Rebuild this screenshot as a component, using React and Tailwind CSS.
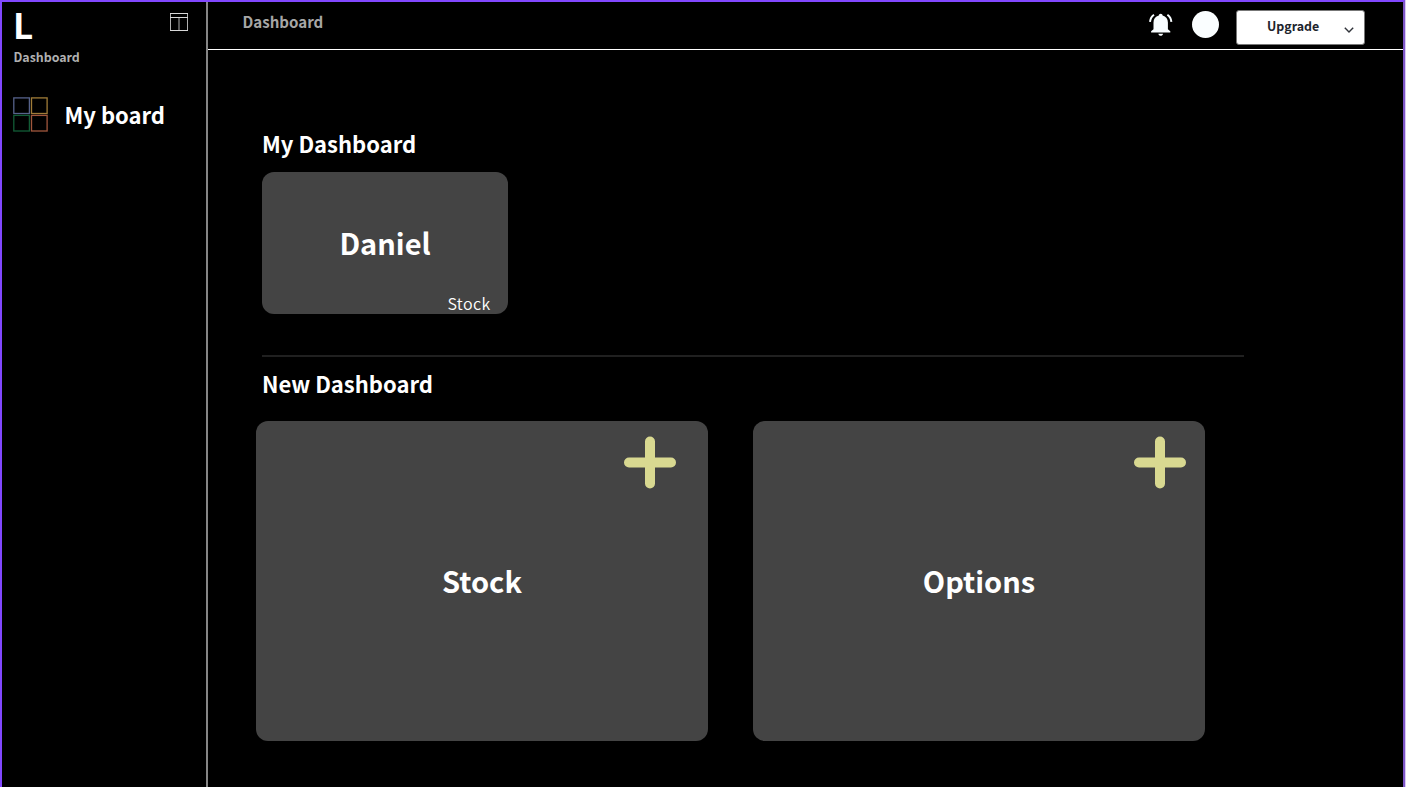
import React from "react";

function LayoutIcon() {
  return (
    <svg className="mt-[10px] h-5 w-5 shrink-0" viewBox="0 0 20 20" fill="none">
      <path d="M1.500 1v18M18.500 1v18M10 6v13" stroke="#b0b0b0" />
      <path d="M1 1.500h18M1 5.500h18M1 18.500h18" stroke="#d8d8d8" />
    </svg>
  );
}

function BoardIcon() {
  return (
    <svg className="h-[35px] w-[35px] shrink-0" viewBox="0 0 35 35" fill="none" strokeWidth="1.3">
      <rect x="0.800" y="0.900" width="15.600" height="15.600" stroke="#56628a" />
      <rect x="18.500" y="0.900" width="15.600" height="15.600" stroke="#a07c38" />
      <rect x="0.800" y="18.400" width="15.600" height="15.600" stroke="#125c36" />
      <rect x="18.500" y="18.400" width="15.600" height="15.600" stroke="#a0563c" />
    </svg>
  );
}

function BellIcon() {
  return (
    <svg className="h-6 w-6" viewBox="0 0 24 24" fill="#f8fdff">
      <path d="M11.700 .8c1.100 0 1.800.7 1.900 1.700 3.400.8 5.300 3.500 5.300 7v6.700l2.400 2.100v1.200H2.100v-1.200l2.400-2.100V9.500c0-3.500 1.900-6.200 5.300-7C9.900 1.500 10.600.8 11.700.8Z" />
      <path d="M9.400 20.700h4.600c-.2 1.300-1.100 2.100-2.300 2.100s-2.100-.8-2.300-2.100Z" />
      <path d="M5 1.700C2.700 3.300 1.300 5.600 1 8.900M18.400 1.700c2.300 1.600 3.700 3.900 4 7.200" fill="none" stroke="#f8fdff" strokeWidth="2" />
    </svg>
  );
}

function PlusIcon() {
  return (
    <svg className="h-[54px] w-[54px]" viewBox="0 0 54 54" stroke="#d9d991" strokeWidth="10" strokeLinecap="round">
      <path d="M27 5.500v42M6 26.500h42" />
    </svg>
  );
}

function Sidebar() {
  return (
    <aside className="flex w-[206px] shrink-0 flex-col border-r-2 border-[#858585] pl-[11px]">
      <div className="flex justify-between pr-[17px]">
        <div className="pt-[2px] text-[35px] leading-10 font-bold">L</div>
        <LayoutIcon />
      </div>
      <div className="mt-[4px] pl-[0.5px] text-[12.400px] leading-[18px] font-bold text-[#b0b0b0]">Dashboard</div>
      <div className="mt-[31px] flex items-center gap-[16.500px]">
        <BoardIcon />
        <span className="mb-px text-[22px] leading-[30px] font-bold">My board</span>
      </div>
    </aside>
  );
}

function Header() {
  return (
    <header className="flex h-12 shrink-0 items-start border-b border-white pr-[38px] pl-[34.500px]">
      <div className="mt-[7px] flex-1 text-[15.100px] leading-6 font-bold text-[#a6a6a6]">Dashboard</div>
      <div className="mt-[11px] mr-[19px]"><BellIcon /></div>
      <div className="mt-[9px] mr-[17px] h-[27px] w-[27px] rounded-full bg-[#fafeff]" />
      <button className="mt-[8px] flex h-[35px] w-[129px] items-center rounded-[3px] border border-[#777777] bg-white pl-[30px] text-[#20242c]">
        <span className="mb-[3px] w-[77px] text-left text-[12.400px] leading-5 font-bold">Upgrade</span>
        <svg className="mt-[4px] h-[10px] w-[10px] shrink-0" viewBox="0 0 10 10" fill="none" stroke="#30333a" strokeWidth="1.400">
          <path d="M.8 2.800 5 7l4.200-4.200" />
        </svg>
      </button>
    </header>
  );
}

function NewCard({ title, iconClass }) {
  return (
    <div className="flex h-[320px] w-[452px] flex-col rounded-[12px] bg-[#444444]">
      <div className={"flex justify-end pt-[15px] " + iconClass}><PlusIcon /></div>
      <div className="mt-[70px] text-center text-[29px] leading-10 font-bold">{title}</div>
    </div>
  );
}

export default function App() {
  return (
    <div className="flex h-[787px] w-[1406px] bg-[#d9c8f6] pr-px">
      <div className="flex flex-1 border-x-2 border-t-2 border-t-[#8248ff] border-r-[#7e57c7] border-l-[#8248ff] bg-black font-['Noto_Sans_CJK_SC',sans-serif] text-white">
        <Sidebar />
        <div className="flex flex-1 flex-col">
          <Header />
          <main className="flex flex-col items-start pt-[77px] pl-[54px]">
            <h2 className="text-[22px] leading-[32px] font-bold">My Dashboard</h2>
            <div className="mt-[13px] flex h-[142px] w-[246px] flex-col rounded-[12px] bg-[#444444]">
              <div className="mt-[50px] text-center text-[29px] leading-10 font-bold">Daniel</div>
              <div className="mt-[30px] pr-[17.500px] text-right text-[16px] leading-[22px] font-[350] tracking-[0.4px]">Stock</div>
            </div>
            <div className="mt-[41px] h-[2px] w-[982px] bg-[#202020]" />
            <h2 className="mt-[10px] text-[22px] leading-[32px] font-bold">New Dashboard</h2>
            <div className="mt-[22px] -ml-[6px] flex gap-[45px]">
              <NewCard title="Stock" iconClass="pr-[31px]" />
              <NewCard title="Options" iconClass="pr-[18px]" />
            </div>
          </main>
        </div>
      </div>
    </div>
  );
}
